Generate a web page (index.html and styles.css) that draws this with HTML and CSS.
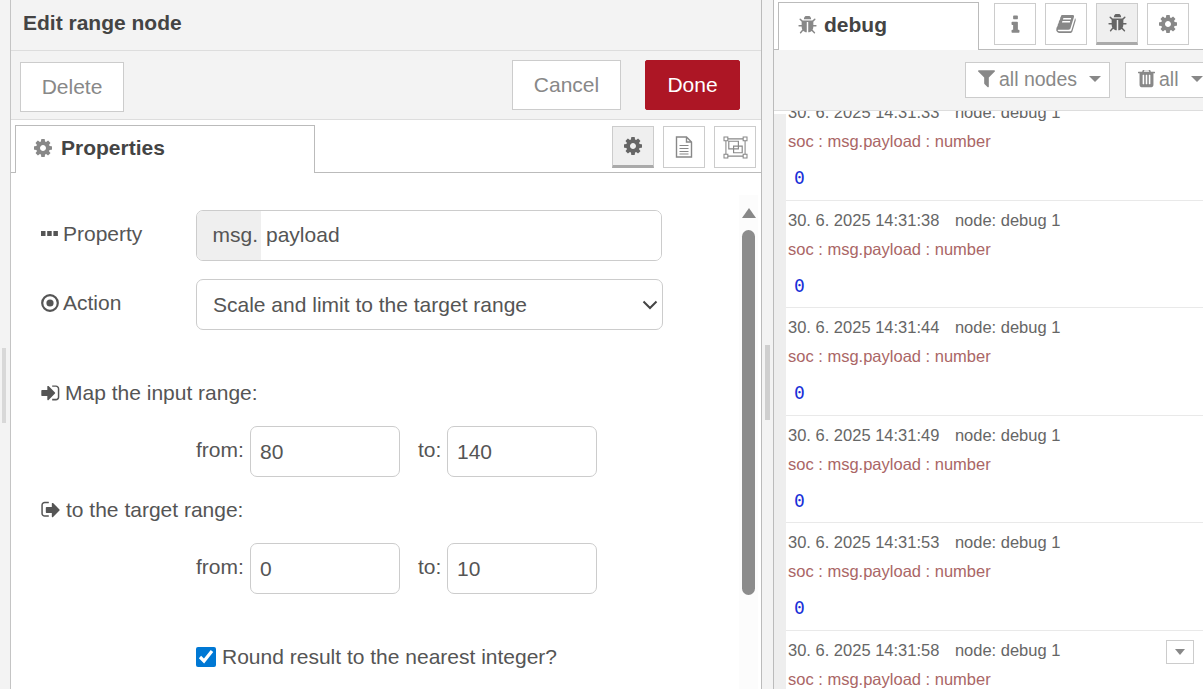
FILE: index.html
```html
<!DOCTYPE html>
<html lang="en">
<head>
<meta charset="utf-8">
<title>Edit range node</title>
<link rel="stylesheet" href="styles.css">
</head>
<body>
<svg class="defs" aria-hidden="true">
  <symbol id="i-cog" viewBox="0 0 1536 1536"><path d="M1024 768q0-106-75-181t-181-75-181 75-75 181 75 181 181 75 181-75 75-181zm512-109v222q0 12-8 23t-20 13l-185 28q-19 54-39 91 35 50 107 138 10 12 10 25t-9 23q-27 37-99 108t-94 71q-12 0-26-9l-138-108q-44 23-91 38-16 136-29 186-7 28-36 28h-222q-14 0-24.5-8.5t-11.5-21.5l-28-184q-49-16-90-37l-141 107q-10 9-25 9-14 0-25-11-126-114-165-168-7-10-7-23 0-12 8-23 15-21 51-66.5t54-70.5q-27-50-41-99l-183-27q-13-2-21-12.5t-8-23.5v-222q0-12 8-23t19-13l186-28q14-46 39-92-40-57-107-138-10-12-10-24 0-10 9-23 26-36 98.5-107.5t94.5-71.5q13 0 26 10l138 107q44-23 91-38 16-136 29-186 7-28 36-28h222q14 0 24.5 8.5t11.5 21.5l28 184q49 16 90 37l142-107q9-9 24-9 13 0 25 10 129 119 165 170 7 8 7 22 0 12-8 23-15 21-51 66.5t-54 70.5q26 50 41 98l183 28q13 2 21 12.5t8 23.5z"/></symbol>
  <symbol id="i-bug" viewBox="0 128 1664 1536"><path d="M1632 960q0 26-19 45t-45 19h-224q0 171-67 290l208 209q19 19 19 45t-19 45q-18 19-45 19t-45-19l-198-197q-5 5-15 13t-42 28.5-65 36.5-82 29-97 13v-896h-128v896q-51 0-101.5-13.5t-87-33-66-39-43.5-32.5l-15-14-183 207q-20 21-48 21-24 0-43-16-19-18-20.5-44.5t15.5-46.5l202-227q-58-114-58-274h-224q-26 0-45-19t-19-45 19-45 45-19h224v-294l-173-173q-19-19-19-45t19-45 45-19 45 19l173 173h844l173-173q19-19 45-19t45 19 19 45-19 45l-173 173v294h224q26 0 45 19t19 45zm-480-576h-640q0-133 93.5-226.5t226.5-93.5 226.5 93.5 93.5 226.5z"/></symbol>
</svg>
<div class="page">
  <div class="gutter"><span class="handle"></span></div>
  <main class="editor">
    <header class="editor-title">Edit range node</header>
    <div class="editor-actions">
      <button class="btn btn-delete">Delete</button>
      <button class="btn btn-cancel">Cancel</button>
      <button class="btn btn-done">Done</button>
    </div>
    <div class="tabbar">
      <div class="tab tab-props"><svg class="ico ico-tab"><use href="#i-cog"/></svg>Properties</div>
      <div class="tool-group">
        <button class="tool active"><svg class="ico ico-tool"><use href="#i-cog"/></svg></button>
        <button class="tool"><svg class="ico-doc" viewBox="0 0 20 22"><path d="M2.5 1h10l5 5v15h-15z M12.5 1v5h5" fill="none" stroke="#888" stroke-width="1.4"/><path d="M5.500 9.500h9M5.500 12.500h9M5.500 15.500h9M5.500 18h9" stroke="#888" stroke-width="1.200"/></svg></button>
        <button class="tool"><svg class="ico-group" viewBox="0 0 26 24"><path d="M3 3h20v18H3z" fill="none" stroke="#888" stroke-width="1.100"/><path d="M6 5.500h10v8H6zM11 10.500h9v7h-9z" fill="none" stroke="#888" stroke-width="1.200"/><path d="M1 1h4v4H1zM21 1h4v4h-4zM1 19h4v4H1zM21 19h4v4h-4z" fill="#fff" stroke="#888" stroke-width="1.100"/></svg></button>
      </div>
    </div>
    <div class="editor-body">
      <form class="form">
        <div class="row">
          <label class="label"><svg class="ico-ell" viewBox="0 0 17 5"><path d="M0 0h4.500v5H0zM6.200 0h4.500v5H6.200zM12.400 0h4.500v5h-4.500z"/></svg>Property</label>
          <div class="typed"><span class="typed-prefix">msg.</span><input class="typed-input" value="payload"></div>
        </div>
        <div class="row row-action">
          <label class="label"><svg class="ico-dot" viewBox="0 0 18 18"><circle cx="9" cy="9" r="7.800" fill="none" stroke="#555" stroke-width="2.200"/><circle cx="9" cy="9" r="3.600" fill="#555"/></svg>Action</label>
          <select class="select"><option>Scale and limit to the target range</option></select>
        </div>
        <div class="heading heading-in"><svg class="ico-in" viewBox="0 0 1568 1536"><path d="M1184 768q0 26-19 45l-544 544q-19 19-45 19t-45-19-19-45v-288h-448q-26 0-45-19t-19-45v-384q0-26 19-45t45-19h448v-288q0-26 19-45t45-19 45 19l544 544q19 19 19 45zM928 128h320q119 0 203.500 84.500t84.500 203.500v704q0 119-84.500 203.500t-203.500 84.500h-320v-140h320q66 0 113-47t47-113v-704q0-66-47-113t-113-47h-320z"/></svg>Map the input range:</div>
        <div class="range">
          <label class="range-label">from:</label><input class="num" value="80">
          <label class="range-label range-to">to:</label><input class="num" value="140">
        </div>
        <div class="heading heading-out"><svg class="ico-in ico-out" viewBox="0 128 1568 1536"><path d="M640 1376q0 4 1 20t.5 26.500-3 23.500-10 19.500-20.500 6.500h-320q-119 0-203.500-84.500t-84.500-203.500v-704q0-119 84.500-203.500t203.500-84.500h320q13 0 22.500 9.500t9.500 22.500q0 4 1 20t.5 26.500-3 23.500-10 19.500-20.500 6.500h-320q-66 0-113 47t-47 113v704q0 66 47 113t113 47h312l11.500 1 11.500 3 8 5.500 7 9 2 13.500zm928-480q0 26-19 45l-544 544q-19 19-45 19t-45-19-19-45v-288h-448q-26 0-45-19t-19-45v-384q0-26 19-45t45-19h448v-288q0-26 19-45t45-19 45 19l544 544q19 19 19 45z"/></svg>to the target range:</div>
        <div class="range">
          <label class="range-label">from:</label><input class="num" value="0">
          <label class="range-label range-to">to:</label><input class="num" value="10">
        </div>
        <label class="check"><input type="checkbox" class="checkbox" checked>Round result to the nearest integer?</label>
      </form>
      <div class="scrollbar">
        <span class="scroll-up"></span>
        <span class="scroll-thumb"></span>
      </div>
    </div>
  </main>
  <div class="splitter"><span class="handle"></span></div>
  <aside class="sidebar">
    <div class="side-tabs">
      <div class="tab tab-debug"><svg class="ico ico-bug-tab"><use href="#i-bug"/></svg>debug</div>
      <div class="side-tools">
        <button class="tool"><svg class="ico-info" viewBox="0 0 640 1536"><path d="M640 1248v128q0 26-19 45t-45 19h-512q-26 0-45-19t-19-45v-128q0-26 19-45t45-19h64v-384h-64q-26 0-45-19t-19-45v-128q0-26 19-45t45-19h384q26 0 45 19t19 45v576h64q26 0 45 19t19 45zm-128-1152v192q0 26-19 45t-45 19h-256q-26 0-45-19t-19-45v-192q0-26 19-45t45-19h256q26 0 45 19t19 45z"/></svg></button>
        <button class="tool"><svg class="ico-book" viewBox="0 128 1664 1536"><path d="M1639 478q40 57 18 129l-275 906q-19 64-76.500 107.500t-122.500 43.500h-923q-77 0-148.500-53.500t-99.500-131.500q-24-67-2-127 0-4 3-27t4-37q1-8-3-21.500t-3-19.500q2-11 8-21t16.500-23.500 16.500-23.500q23-38 45-91.500t30-91.500q3-10 .5-30t-.5-28q3-11 17-28t17-23q21-36 42-92t25-90q1-9-2.500-32t.5-28q4-13 22-30.500t22-22.500q19-26 42.500-84.500t27.500-96.500q1-8-3-25.500t-2-26.500q2-8 9-18t18-23 17-21q8-12 16.500-35t15-43.500 17-43.500 20.500-36 28-25 36-10 46 8l-1 3q42-10 61-10h761q74 0 114 56t18 130l-274 906q-36 119-71.500 153.500t-128.500 34.500h-869q-27 0-38 15-11 16-1 43 24 70 144 70h923q29 0 56-15.500t35-41.500l300-987q7-22 5-57 38 15 59 43zm-1064 2q-4 13 2 22.500t20 9.500h608q13 0 25.500-9.500t16.500-22.500l21-64q4-13-2-22.500t-20-9.500h-608q-13 0-25.500 9.500t-16.500 22.500zm-83 256q-4 13 2 22.500t20 9.500h608q13 0 25.500-9.500t16.500-22.500l21-64q4-13-2-22.500t-20-9.500h-608q-13 0-25.500 9.500t-16.500 22.500z"/></svg></button>
        <button class="tool active"><svg class="ico ico-bug"><use href="#i-bug"/></svg></button>
        <button class="tool"><svg class="ico ico-tool"><use href="#i-cog"/></svg></button>
      </div>
    </div>
    <div class="side-toolbar">
      <button class="filter filter-nodes"><svg class="ico-filter" viewBox="0 128 1408 1536"><path d="M1403 167q17 41-14 70l-493 493v742q0 42-39 59-13 5-25 5-27 0-45-19l-256-256q-19-19-19-45v-486l-493-493q-31-29-14-70 17-39 59-39h1280q42 0 59 39z"/></svg>all nodes<span class="caret"></span></button>
      <button class="filter filter-all"><svg class="ico-filter" viewBox="0 128 1408 1536"><path d="M512 1248v-704q0-14-9-23t-23-9h-64q-14 0-23 9t-9 23v704q0 14 9 23t23 9h64q14 0 23-9t9-23zm256 0v-704q0-14-9-23t-23-9h-64q-14 0-23 9t-9 23v704q0 14 9 23t23 9h64q14 0 23-9t9-23zm256 0v-704q0-14-9-23t-23-9h-64q-14 0-23 9t-9 23v704q0 14 9 23t23 9h64q14 0 23-9t9-23zm-544-992h448l-48-117q-7-9-17-11h-317q-10 2-17 11zm928 32v64q0 14-9 23t-23 9h-96v948q0 83-47 143.500t-113 60.500h-832q-66 0-113-58.500t-47-141.500v-952h-96q-14 0-23-9t-9-23v-64q0-14 9-23t23-9h309l70-167q15-37 54-63t79-26h320q40 0 79 26t54 63l70 167h309q14 0 23 9t9 23z"/></svg>all<span class="caret caret-all"></span></button>
    </div>
    <div class="log">
      <div class="msg msg-first">
        <div class="meta"><span class="time">30. 6. 2025 14:31:33</span><span>node: debug 1</span></div>
        <div class="topic">soc : msg.payload : number</div>
        <div class="value">0</div>
      </div>
      <div class="msg">
        <div class="meta"><span class="time">30. 6. 2025 14:31:38</span><span>node: debug 1</span></div>
        <div class="topic">soc : msg.payload : number</div>
        <div class="value">0</div>
      </div>
      <div class="msg">
        <div class="meta"><span class="time">30. 6. 2025 14:31:44</span><span>node: debug 1</span></div>
        <div class="topic">soc : msg.payload : number</div>
        <div class="value">0</div>
      </div>
      <div class="msg">
        <div class="meta"><span class="time">30. 6. 2025 14:31:49</span><span>node: debug 1</span></div>
        <div class="topic">soc : msg.payload : number</div>
        <div class="value">0</div>
      </div>
      <div class="msg">
        <div class="meta"><span class="time">30. 6. 2025 14:31:53</span><span>node: debug 1</span></div>
        <div class="topic">soc : msg.payload : number</div>
        <div class="value">0</div>
      </div>
      <div class="msg">
        <div class="meta"><span class="time">30. 6. 2025 14:31:58</span><span>node: debug 1</span></div>
        <div class="topic">soc : msg.payload : number</div>
        <button class="msg-menu"><span class="caret caret-small"></span></button>
      </div>
    </div>
  </aside>
</div>
</body>
</html>
```
FILE: styles.css
```css
* { box-sizing: border-box; }
html, body { margin: 0; height: 100%; overflow: hidden; }
body { font-family: "Liberation Sans", Arial, sans-serif; color: #555; background: #f3f3f3; }
.defs { display: none; }
.page { display: flex; height: 689px; }
button { font-family: inherit; cursor: pointer; }
.gutter { width: 11px; flex: none; background: #f3f3f3; border-right: 1px solid #c4c4c4; display: flex; align-items: flex-start; }
.gutter .handle { width: 4px; height: 75px; margin: 348px 0 0 2px; background: #d8d8d8; }
.editor { width: 751px; flex: none; background: #fff; border-right: 1px solid #bbb; display: flex; flex-direction: column; overflow: hidden; }
.editor-title { height: 51px; background: #f3f3f3; border-bottom: 1px solid #ddd; padding: 11px 12px 0; font-size: 21px; line-height: 24px; font-weight: 700; color: #444; }
.editor-actions { height: 69px; flex: none; background: #f3f3f3; border-bottom: 1px solid #ddd; display: flex; align-items: flex-start; padding: 9px 21px 0 9px; }
.btn { height: 50px; font-size: 21px; border: 1px solid #ccc; background: #fff; color: #888; padding: 0; }
.btn-delete { width: 104px; margin-top: 2px; margin-right: auto; }
.btn-cancel { width: 109px; }
.btn-done { width: 95px; margin-left: 24px; background: #ad1625; border-color: #ad1625; color: #fff; border-radius: 2px; }
.tabbar { height: 53px; flex: none; border-bottom: 1px solid #bbb; display: flex; align-items: flex-end; justify-content: space-between; padding: 0 5px 0 4px; position: relative; }
.tab { background: #fff; border: 1px solid #bbb; border-bottom: 0; font-weight: 700; color: #444; font-size: 21px; display: flex; align-items: center; }
.tab-props { width: 300px; height: 48px; margin-bottom: -1px; padding: 0 0 4px 18px; }
.ico { fill: #888; display: block; }
.ico-tab { width: 18px; height: 18px; margin-right: 9px; }
.tool-group { display: flex; gap: 9px; align-self: flex-start; margin-top: 6px; }
.tool { width: 42px; height: 42px; padding: 0; border: 1px solid #ccc; background: #fff; display: flex; align-items: center; justify-content: center; }
.tool.active { background: #efefef; border-bottom: 3px solid #aaa; }
.tool.active .ico { fill: #666; }
.ico-tool { width: 18px; height: 18px; }
.ico-doc { width: 20px; height: 22px; }
.ico-group { width: 25px; height: 23px; }
.editor-body { flex: 1; min-height: 0; display: flex; overflow: hidden; }
.form { flex: 1; min-width: 0; padding: 37px 0 0 30px; overflow: hidden; }
.row { display: flex; align-items: center; }
.row-action { margin-top: 18px; }
.label { width: 155px; flex: none; font-size: 21px; line-height: 24px; display: flex; align-items: center; color: #555; position: relative; top: -2px; }
.ico-ell { width: 17px; height: 5px; margin-right: 5px; fill: #555; }
.ico-dot { width: 18px; height: 18px; margin-right: 4px; }
.ico-in { width: 19px; height: 18px; margin-right: 5px; fill: #555; }
.ico-out { margin-right: 6px; }
.typed { width: 466px; height: 51px; display: flex; border: 1px solid #ccc; border-radius: 7px; overflow: hidden; }
.typed-prefix { width: 64px; flex: none; background: #efefef; font-size: 21px; line-height: 48px; text-align: right; padding-right: 3px; color: #555; }
.typed-input { flex: 1; min-width: 0; border: 0; outline: 0; font: 21px "Liberation Sans", Arial, sans-serif; color: #555; padding: 0 0 2px 5px; }
.select { width: 467px; height: 51px; border: 1px solid #ccc; border-radius: 7px; appearance: none; background: #fff url("data:image/svg+xml,%3Csvg xmlns='http://www.w3.org/2000/svg' width='16' height='10' viewBox='0 0 16 10'%3E%3Cpath d='M1.500 1.500 8 8l6.500-6.500' fill='none' stroke='%23444' stroke-width='2'/%3E%3C/svg%3E") no-repeat right 4px center; font: 21px "Liberation Sans", Arial, sans-serif; color: #555; padding: 0 24px 0 16px; }
.heading { font-size: 21px; line-height: 24px; display: flex; align-items: center; color: #555; }
.heading-in { margin-top: 51px; }
.heading-out { margin-top: 21px; }
.range { display: flex; align-items: center; margin: 21px 0 0 155px; }
.range-label { font-size: 21px; width: 54px; flex: none; position: relative; top: -2px; }
.range-to { width: 29px; margin-left: 18px; }
.num { width: 150px; height: 51px; border: 1px solid #ccc; border-radius: 7px; font: 21px "Liberation Sans", Arial, sans-serif; color: #555; padding: 0 9px; outline: 0; }
.check { display: flex; align-items: center; margin: 51px 0 0 155px; font-size: 21px; line-height: 24px; color: #555; white-space: nowrap; }
.checkbox { width: 20px; height: 20px; margin: 0 6px 0 0; accent-color: #0078d4; }
.scrollbar { width: 19px; flex: none; margin: 22px 3px 0 0; background: #fcfcfc; position: relative; display: flex; flex-direction: column; align-items: center; }
.scroll-up { width: 0; height: 0; margin-top: 13px; border-left: 7px solid transparent; border-right: 7px solid transparent; border-bottom: 10px solid #888; }
.scroll-thumb { width: 13px; height: 365px; margin-top: 12px; background: #8c8c8c; border-radius: 7px; }
.splitter { width: 12px; flex: none; background: #f3f3f3; border-right: 1px solid #bbb; }
.splitter .handle { display: block; width: 5px; height: 75px; margin: 345px 0 0 3px; background: #cfcfcf; }
.sidebar { flex: 1; min-width: 0; display: flex; flex-direction: column; overflow: hidden; background: #fff; }
.side-tabs { height: 50px; flex: none; border-bottom: 1px solid #bbb; display: flex; align-items: flex-start; padding: 2px 0 0 4px; position: relative; }
.tab-debug { width: 201px; height: 48px; padding: 0 0 4px 19px; }
.ico-bug-tab { width: 19px; height: 18px; margin-right: 7px; }
.side-tools { display: flex; gap: 9px; margin: 1px 0 0 15px; }
.side-tools .tool { width: 42px; }
.ico-info { width: 9px; height: 19px; fill: #888; }
.ico-book { width: 20px; height: 18px; fill: #888; }
.ico-bug { width: 19px; height: 18px; }
.side-toolbar { height: 61px; flex: none; background: #f3f3f3; border-bottom: 1px solid #ddd; display: flex; align-items: flex-start; padding: 12px 0 0 191px; gap: 15px; }
.filter { height: 36px; flex: none; background: #fff; border: 1px solid #ccc; color: #888; font-size: 19.5px; display: flex; align-items: center; padding: 0 0 2px 12px; }
.filter-nodes { width: 145px; }
.filter-all { width: 100px; }
.ico-filter { width: 17px; height: 19px; fill: #888; margin-right: 4px; }
.caret { width: 0; height: 0; margin-left: 12px; border-left: 6px solid transparent; border-right: 6px solid transparent; border-top: 6px solid #888; }
.log { flex: 1; min-height: 0; overflow: hidden; padding-left: 12px; background: linear-gradient(#fff 3px, #eee 3px) left / 12px 100% no-repeat; }
.msg { height: 107.5px; border-bottom: 1px solid #e9e9e9; padding: 9px 0 0 2px; position: relative; background: #fff; font-size: 16.5px; }
.msg-first { margin-top: -18px; }
.meta { line-height: 20px; color: #666; white-space: nowrap; display: flex; }
.time { margin-right: 15.5px; }
.topic { line-height: 20px; margin-top: 9px; color: #a66; white-space: nowrap; }
.value { font-family: "DejaVu Sans Mono", monospace; font-size: 18px; line-height: 20px; margin: 17px 0 0 6px; color: #1a2fd8; }
.msg-menu { position: absolute; top: 9px; right: 9px; width: 28px; height: 24px; padding: 0; background: #fff; border: 1px solid #ccc; display: flex; align-items: center; justify-content: center; }
.caret-small { margin-left: 0; border-left-width: 5px; border-right-width: 5px; }
```
